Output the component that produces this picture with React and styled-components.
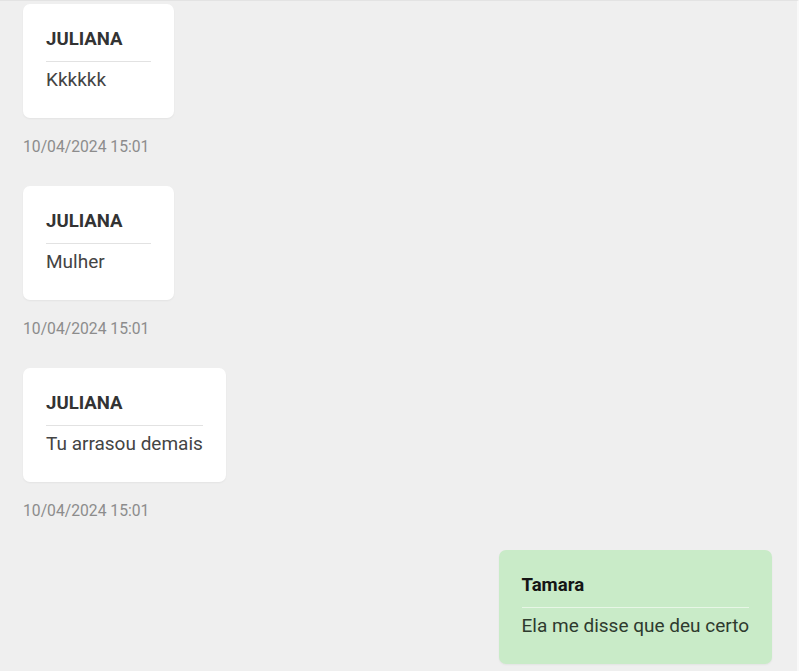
import React from "react";
import styled, { createGlobalStyle } from "styled-components";

const GlobalStyle = createGlobalStyle`
  html, body {
    margin: 0;
    padding: 0;
    background: #efefef;
  }
  body {
    font-family: Roboto, "Liberation Sans", Arial, sans-serif;
  }
`;

const ChatWrapper = styled.div`
  box-sizing: border-box;
  height: 671px;
  overflow: hidden;
  background: #efefef;
  border-top: 1px solid #e3e3e3;
  border-right: 2px solid #f9f9f9;
  padding: 3px 25px 0 23px;
  display: flex;
  flex-direction: column;
`;

const MessageRow = styled.div`
  display: flex;
  flex-direction: column;
  align-items: ${(props) => (props.mine ? "flex-end" : "flex-start")};
  margin-bottom: 30px;
`;

const Bubble = styled.div`
  box-sizing: border-box;
  min-width: 151px;
  padding: 25px 23px 28px;
  border-radius: 7px;
  background: ${(props) => (props.mine ? "#c9ebc8" : "#ffffff")};
  box-shadow: 0 1px 2px rgba(0, 0, 0, 0.05);
`;

const Author = styled.div`
  font-size: 18.6px;
  line-height: 21px;
  font-weight: 700;
  color: ${(props) => (props.mine ? "#151515" : "#333333")};
  text-transform: ${(props) => (props.mine ? "none" : "uppercase")};
  white-space: nowrap;
`;

const Divider = styled.div`
  height: 1px;
  margin: 11px 0 7px;
  background: ${(props) =>
    props.mine ? "rgba(255, 255, 255, 0.55)" : "#e2e2e2"};
`;

const Text = styled.div`
  font-size: 19px;
  line-height: 21px;
  color: ${(props) => (props.mine ? "#2e3a2e" : "#444444")};
  white-space: nowrap;
`;

const Timestamp = styled.div`
  margin-top: 20px;
  font-size: 15.7px;
  line-height: 18px;
  color: #8c8c8c;
`;

const messages = [
  { author: "Juliana", text: "Kkkkkk", date: "10/04/2024 15:01" },
  { author: "Juliana", text: "Mulher", date: "10/04/2024 15:01" },
  { author: "Juliana", text: "Tu arrasou demais", date: "10/04/2024 15:01" },
  { author: "Tamara", text: "Ela me disse que deu certo", mine: true },
];

function Message({ author, text, date, mine }) {
  return (
    <MessageRow mine={mine}>
      <Bubble mine={mine}>
        <Author mine={mine}>{author}</Author>
        <Divider mine={mine} />
        <Text mine={mine}>{text}</Text>
      </Bubble>
      {date && <Timestamp>{date}</Timestamp>}
    </MessageRow>
  );
}

export default function App() {
  return (
    <>
      <GlobalStyle />
      <ChatWrapper>
        {messages.map((m, i) => (
          <Message key={i} {...m} />
        ))}
      </ChatWrapper>
    </>
  );
}
